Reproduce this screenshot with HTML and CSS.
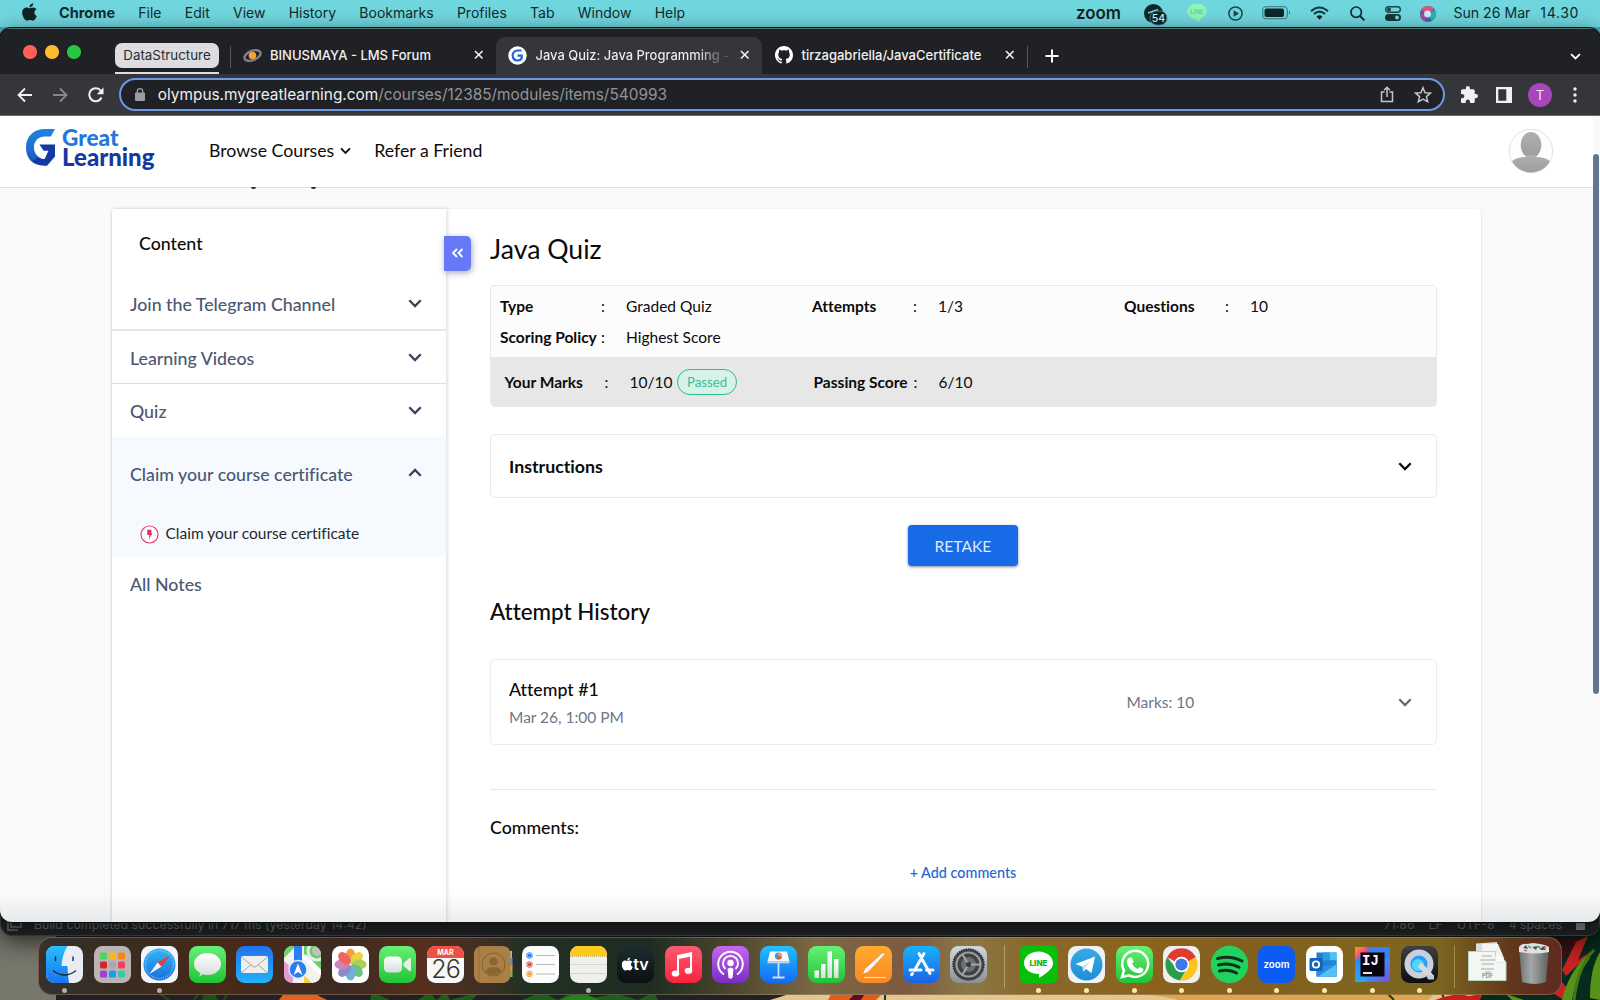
FILE: index.html
```html
<!DOCTYPE html>
<html lang="en">
<head>
<meta charset="utf-8">
<title>Java Quiz: Java Programming</title>
<link rel="stylesheet" href="styles.css">
</head>
<body>
<svg class="defs" width="0" height="0" aria-hidden="true">
  <defs>
    <linearGradient id="gGreen" x2="0" y2="1"><stop stop-color="#67f076"/><stop offset="1" stop-color="#1fc435"/></linearGradient>
    <linearGradient id="gBlue" x2="0" y2="1"><stop stop-color="#2272ee"/><stop offset="1" stop-color="#20b2f8"/></linearGradient>
    <linearGradient id="gFinder" x2="0" y2="1"><stop stop-color="#25c0fa"/><stop offset="1" stop-color="#1c73f4"/></linearGradient>
    <linearGradient id="gRed" x2="0" y2="1"><stop stop-color="#fb5b74"/><stop offset="1" stop-color="#fa233b"/></linearGradient>
    <linearGradient id="gPurple" x2="0" y2="1"><stop stop-color="#c567f0"/><stop offset="1" stop-color="#7a2cc4"/></linearGradient>
    <linearGradient id="gKey" x2="0" y2="1"><stop stop-color="#22c1fd"/><stop offset="1" stop-color="#1469f4"/></linearGradient>
    <linearGradient id="gOrange" x2="0" y2="1"><stop stop-color="#ffab2e"/><stop offset="1" stop-color="#fb8723"/></linearGradient>
    <linearGradient id="gStore" x2="0" y2="1"><stop stop-color="#17b3f8"/><stop offset="1" stop-color="#1d62e6"/></linearGradient>
    <linearGradient id="gGrey" x2="0" y2="1"><stop stop-color="#d2d8de"/><stop offset="1" stop-color="#8d8f92"/></linearGradient>
    <linearGradient id="gWhite" x2="0" y2="1"><stop stop-color="#fff"/><stop offset="1" stop-color="#d8dcdc"/></linearGradient>
    <linearGradient id="gTv" x2="0" y2="1"><stop stop-color="#1d2e30"/><stop offset="1" stop-color="#0a0f12"/></linearGradient>
    <linearGradient id="gTele" x2="0" y2="1"><stop stop-color="#37abe6"/><stop offset="1" stop-color="#1e8fd2"/></linearGradient>
    <linearGradient id="gSafari" x2="0" y2="1"><stop stop-color="#31b6f3"/><stop offset="1" stop-color="#1a6fe0"/></linearGradient>
    <linearGradient id="gIj" x2="1" y2="1"><stop stop-color="#fd9a28"/><stop offset=".25" stop-color="#f0359c"/><stop offset=".6" stop-color="#3f8cf5"/><stop offset="1" stop-color="#7a4df0"/></linearGradient>
    <linearGradient id="gIjBlue" x2="0" y2="1"><stop stop-color="#2f7ff8"/><stop offset="1" stop-color="#28a9ee"/></linearGradient>
    <linearGradient id="gQt" x2="0" y2="1"><stop stop-color="#3e4043"/><stop offset="1" stop-color="#0d0d0f"/></linearGradient>
    <linearGradient id="gTrash" x2="1"><stop stop-color="#6d7273"/><stop offset=".4" stop-color="#a4a8a8"/><stop offset="1" stop-color="#5d6060"/></linearGradient>
    <linearGradient id="gG" x2="0" y2="1"><stop stop-color="#1f83dd"/><stop offset=".6" stop-color="#1f6fd2"/><stop offset="1" stop-color="#1a55bb"/></linearGradient>
    <linearGradient id="gAvatar" x2="0" y2="1"><stop stop-color="#b0b0b0"/><stop offset="1" stop-color="#9c9c9c"/></linearGradient>
    <symbol id="chev" viewBox="0 0 14 9"><path d="M1.3 1.3 7 7l5.700-5.700" fill="none" stroke="currentColor" stroke-width="2.300"/></symbol>
    <symbol id="close" viewBox="0 0 10 10"><path d="M1 1l8 8M9 1 1 9" fill="none" stroke="currentColor" stroke-width="1.700"/></symbol>
    <symbol id="apple" viewBox="0 0 384 512"><path fill="currentColor" d="M318.700 268.700c-.2-36.700 16.400-64.400 50-84.800-18.800-26.900-47.200-41.700-84.700-44.600-35.500-2.800-74.300 20.700-88.500 20.700-15 0-49.400-19.700-76.400-19.700C63.300 141.200 4 184.800 4 273.500q0 39.300 14.400 81.200c12.800 36.700 59 126.700 107.200 125.200 25.200-.6 43-17.900 75.800-17.900 31.800 0 48.300 17.900 76.400 17.900 48.600-.7 90.400-82.500 102.600-119.300-65.200-30.700-61.700-90-61.700-91.900zm-56.600-164.200c27.300-32.400 24.800-61.900 24-72.500-24.100 1.400-52 16.400-67.900 34.900-17.500 19.800-27.800 44.300-25.600 71.900 26.100 2 49.900-11.400 69.500-34.300z"/></symbol>
    <symbol id="gl" viewBox="77 384 84 110" preserveAspectRatio="none"><path fill="url(#gG)" d="M161 384 149 406H132C113 406 100 420 100 438C100 452 106 462 115 468L95 482C83 472 77 456 77 438C77 405 100 384 132 384z"/><path fill="#1539a2" d="M116 430H161V466L138 493C118 493 105 489 94 481L113 467C120 472 126 473 131 473L142 449H128z"/></symbol>
  </defs>
</svg>

<div class="desktop">
  <svg class="wallpaper" viewBox="0 0 1600 100" preserveAspectRatio="none">
    <rect width="1600" height="100" fill="#231f27"/>
    <path d="M0 0H56V100H0z" fill="#77776c"/>
    <path d="M160 94l9 6M200 92l-6 8M205 92h8l4 8h-14zM228 92l-4 8" stroke="#1d4d1a" stroke-width="2" fill="#18521a"/>
    <path d="M285 92h8l10 3 8-3 16 8h-48z" fill="#e65f1f"/>
    <path d="M372 92l18 8h-20zM430 92l6 8 10-8 4 8 30-8-8 8h50l20-8 16 8 14-8 6 8 40-6 20 6 16-8 4 8h-240z" fill="#1c5d17"/>
    <path d="M560 100l20-8 20 8z" fill="#24841c"/>
    <path d="M770 100q20-6 30-10h800v10z" fill="#e4c68c"/>
    <path d="M1118 94q40 0 60 6h250l10-10h-320z" fill="#dfa34e"/>
    <path d="M832 92h52l-8 8h-48z" fill="#e65b1c"/><path d="M856 92h10l-5 8h-12z" fill="#5b0e22"/>
    <path d="M885 92v8M1388 94l6 6M1441 92l4 8" stroke="#1c3d1c" stroke-width="2"/>
    <path d="M1435 100q20-8 34-4 20-4 30 4z" fill="#cb1d1d"/>
    <path d="M1520 0H1600V100H1480z" fill="#062a1c"/>
    <path d="M1535 38h50l-24 24-36 8z" fill="#3a1410"/>
    <path d="M1562 70l14-28 12-6-10 24 18-12-30 28zM1562 82l10 12-8 6-20-12z" fill="#c92222"/>
    <path d="M1562 100q6-26 24-44l4 2q-14 18-18 42zM1590 98q0-30 10-46v48zM1506 94l18 6h-12z" fill="#57921a"/>
    <path d="M1574 100q4-34 20-50" fill="none" stroke="#3c7a17" stroke-width="3"/>
  </svg>

  <div class="ide">
    <div class="ide-status">
      <svg class="ide-box" viewBox="0 0 14 14"><path d="M4 0V10H14V0M1 3V13H11" fill="none" stroke="#626466" stroke-width="1.500"/></svg>
      <span class="ide-msg">Build completed successfully in 717 ms (yesterday 14:42)</span>
      <span class="ide-info"><span>71:86</span><span>LF</span><span>UTF-8</span><span>4 spaces</span><i></i></span>
    </div>
  </div>

  <header class="menubar">
    <svg class="apple"><use href="#apple"/></svg>
    <nav class="menus"><b>Chrome</b><span>File</span><span>Edit</span><span>View</span><span>History</span><span>Bookmarks</span><span>Profiles</span><span>Tab</span><span>Window</span><span>Help</span></nav>
    <div class="status">
      <svg width="46" height="14" viewBox="0 0 46 14"><text x="0" y="12.500" class="zoom-word" textLength="45" lengthAdjust="spacingAndGlyphs">zoom</text></svg>
      <svg width="23" height="21" viewBox="0 0 23 21"><circle cx="9.500" cy="9.500" r="9.500" fill="#0f2628"/><path d="M4 9l10-3.500" stroke="#6fd5dc" stroke-width="1.500"/><rect x="6" y="7" width="17" height="14" rx="7" fill="#0f2628" stroke="#49939a" stroke-width=".8"/><text x="14.500" y="18" class="badge-num">54</text></svg>
      <svg width="20" height="20" viewBox="0 0 20 20"><path d="M10 .5c5.300 0 9.500 3.500 9.500 8 0 4-4 6.500-9.500 11V16.500C4.500 16.500.5 13 .5 8.500s4.200-8 9.500-8z" fill="#8df5b6"/><text x="10" y="11" class="line-mini">LINE</text></svg>
      <svg width="15" height="15" viewBox="0 0 15 15"><circle cx="7.500" cy="7.500" r="6.600" fill="none" stroke="#17474b" stroke-width="1.500"/><path d="M5.600 4.300 11 7.500l-5.400 3.200z" fill="#17474b"/></svg>
      <svg width="29" height="14" viewBox="0 0 29 14"><rect x=".7" y=".7" width="24.600" height="12" rx="3.500" fill="none" stroke="#3d8b91" stroke-width="1.300"/><rect x="2.500" y="2.500" width="19.500" height="8.500" rx="2" fill="#0f2628"/><path d="M27 4.500q2 2 0 4.500z" fill="#2d7177"/></svg>
      <svg width="19" height="14" viewBox="0 0 19 14"><path d="M1 5.200q8.500-7.500 17 0M3.900 8.100q5.600-5 11.200 0" fill="none" stroke="#123c40" stroke-width="2"/><path d="M6.500 10.600q3-2.500 6 0L9.500 13.700z" fill="#0f2628"/></svg>
      <svg width="15" height="15" viewBox="0 0 15 15"><circle cx="6.200" cy="6.200" r="5.200" fill="none" stroke="#0f2f32" stroke-width="1.700"/><path d="M10 10l4.400 4.400" stroke="#0f2f32" stroke-width="2"/></svg>
      <svg width="16" height="15" viewBox="0 0 16 15"><rect x=".7" y=".7" width="14.600" height="5.500" rx="2.700" fill="none" stroke="#14464b" stroke-width="1.400"/><circle cx="4" cy="3.400" r="2" fill="#14464b"/><rect y="8" width="16" height="7" rx="3.500" fill="#14383b"/><circle cx="12" cy="11.500" r="2" fill="#6fd5dc"/></svg>
      <svg width="16" height="16" viewBox="0 0 16 16"><circle cx="8" cy="8" r="8" fill="#4a61a8"/><path d="M8 8 1 4A8 8 0 0 1 14 3z" fill="#e0527c"/><path d="M8 8l7-4a8 8 0 0 1-3 11z" fill="#2bb5ae"/><path d="M8 8 4 15A8 8 0 0 1 0 8z" fill="#a34bb0"/><circle cx="7.500" cy="8" r="3.400" fill="#dff" opacity=".85"/></svg>
      <span class="clock"><span>Sun 26 Mar</span><span class="time">14.30</span></span>
    </div>
  </header>

  <main class="window">
    <div class="tabstrip">
      <div class="lights"><i class="r"></i><i class="y"></i><i class="g"></i></div>
      <div class="group"><span>DataStructure</span></div>
      <div class="tab first">
        <svg width="19" height="15" viewBox="0 0 19 15"><ellipse cx="9.500" cy="7.500" rx="8.500" ry="4.600" fill="none" stroke="#7f8186" stroke-width="2.400" transform="rotate(-22 9.500 7.500)"/><circle cx="9.500" cy="7.500" r="3.800" fill="#f0a03c"/></svg>
        <span class="tab-title">BINUSMAYA - LMS Forum</span><svg class="x"><use href="#close"/></svg>
      </div>
      <div class="tab active">
        <svg width="19" height="19" viewBox="0 0 19 19"><circle cx="9.500" cy="9.500" r="9.200" fill="#fff"/><path d="M13.500 4.500H9.800a5 5 0 1 0 3.900 7.800V9.600H9.500" fill="none" stroke="#1f62c9" stroke-width="2.200"/></svg>
        <span class="tab-title fade">Java Quiz: Java Programming -</span><svg class="x"><use href="#close"/></svg>
      </div>
      <div class="tab third">
        <svg width="18" height="18" viewBox="0 0 16 16"><path fill="#fff" d="M8 0C3.580 0 0 3.580 0 8c0 3.540 2.290 6.530 5.470 7.590.4.070.55-.17.55-.38 0-.19-.01-.82-.01-1.490-2.010.37-2.530-.49-2.690-.94-.09-.23-.48-.94-.82-1.130-.28-.15-.68-.52-.01-.53.63-.01 1.080.58 1.230.82.72 1.210 1.870.87 2.330.66.070-.52.28-.87.51-1.070-1.780-.2-3.640-.89-3.640-3.950 0-.87.31-1.590.82-2.150-.08-.2-.36-1.020.08-2.120 0 0 .67-.21 2.200.82.640-.18 1.320-.27 2-.27s1.360.09 2 .27c1.530-1.040 2.200-.82 2.200-.82.440 1.100.16 1.920.08 2.120.51.560.82 1.270.82 2.150 0 3.070-1.870 3.750-3.650 3.950.29.250.54.730.54 1.480 0 1.070-.01 1.930-.01 2.200 0 .21.15.46.55.38A8 8 0 0 0 16 8c0-4.420-3.580-8-8-8z"/></svg>
        <span class="tab-title">tirzagabriella/JavaCertificate</span><svg class="x"><use href="#close"/></svg>
      </div>
      <svg class="plus" viewBox="0 0 14 14"><path d="M7 .5v13M.5 7h13" stroke="#fff" stroke-width="2"/></svg>
      <svg class="tabs-more"><use href="#chev"/></svg>
    </div>

    <div class="toolbar">
      <svg class="nav-i" viewBox="0 0 16 16"><path d="M15 8H2M8 1.500 1.500 8 8 14.500" fill="none" stroke="#f0f1f3" stroke-width="1.800"/></svg>
      <svg class="nav-i dim" viewBox="0 0 16 16"><path d="M1 8h13M8 1.500 14.500 8 8 14.500" fill="none" stroke="#85878a" stroke-width="1.800"/></svg>
      <svg class="nav-i" viewBox="0 0 16 16"><path d="M13.600 10.500A6.500 6.500 0 1 1 12.800 3.600" fill="none" stroke="#f0f1f3" stroke-width="2"/><path d="M15.500.5v6.700H8.800z" fill="#f0f1f3"/></svg>
      <div class="omnibox">
        <svg width="10" height="13" viewBox="0 0 10 13"><rect y="4.500" width="10" height="8.500" rx="1" fill="#9a9da1"/><path d="M2.300 5V3.300a2.700 2.700 0 0 1 5.400 0V5" fill="none" stroke="#9a9da1" stroke-width="1.400"/></svg>
        <span class="url">olympus.mygreatlearning.com<em>/courses/12385/modules/items/540993</em></span>
        <svg width="14" height="17" viewBox="0 0 14 17"><path d="M4.500 6H1.500v9.500h11V6H9.500M7 11V1.500M4 4.300l3-3 3 3" fill="none" stroke="#c3c5c8" stroke-width="1.500"/></svg>
        <svg width="18" height="17" viewBox="0 0 18 17"><path d="M9 1.700l2.100 5 5.400.4-4.100 3.500 1.300 5.200L9 13l-4.700 2.800 1.300-5.200L1.500 7.100l5.400-.4z" fill="none" stroke="#c3c5c8" stroke-width="1.500"/></svg>
      </div>
      <div class="tools">
        <svg width="17" height="17" viewBox="2 1 21 21"><path fill="#f0f1f3" d="M20.500 11H19V7c0-1.100-.9-2-2-2h-4V3.500a2.500 2.500 0 0 0-5 0V5H4c-1.100 0-1.990.9-1.990 2v3.800H3.500c1.490 0 2.700 1.210 2.700 2.700s-1.210 2.700-2.700 2.700H2V20c0 1.100.9 2 2 2h3.800v-1.500c0-1.490 1.210-2.700 2.700-2.700s2.700 1.210 2.700 2.700V22H17c1.100 0 2-.9 2-2v-4h1.500a2.500 2.500 0 0 0 0-5z"/></svg>
        <svg width="16" height="16" viewBox="0 0 16 16"><path d="M0 0h16v16H0zM2.300 2.300v11.400h8V2.300z" fill="#f0f1f3" fill-rule="evenodd"/></svg>
        <span class="profile">T</span>
        <svg width="4" height="16" viewBox="0 0 4 16"><circle cx="2" cy="2" r="1.700" fill="#f0f1f3"/><circle cx="2" cy="8" r="1.700" fill="#f0f1f3"/><circle cx="2" cy="14" r="1.700" fill="#f0f1f3"/></svg>
      </div>
    </div>

    <div class="page">
      <div class="site-header">
        <div class="logo"><svg width="29" height="37"><use href="#gl"/></svg><div class="logo-words"><span>Great</span><strong>Learning</strong></div></div>
        <a class="browse">Browse Courses <svg><use href="#chev"/></svg></a>
        <a class="refer">Refer a Friend</a>
        <svg class="avatar" viewBox="0 0 46 46"><defs><clipPath id="av"><circle cx="23" cy="23" r="21.500"/></clipPath></defs><circle cx="23" cy="23" r="21.700" fill="#fdfdfd" stroke="#e2e2e2"/><g clip-path="url(#av)" fill="url(#gAvatar)"><ellipse cx="23" cy="17" rx="10.300" ry="13"/><path d="M18 27h10v2q10 0 15 5v12H3V34q5-5 15-5z"/></g></svg>
      </div>
      <div class="crumbs"><i></i><i></i></div>
      <div class="card">
        <aside class="sidebar">
          <h2>Content</h2>
          <div class="row line2">Join the Telegram Channel<svg class="cv"><use href="#chev"/></svg></div>
          <div class="row line1">Learning Videos<svg class="cv"><use href="#chev"/></svg></div>
          <div class="row">Quiz<svg class="cv"><use href="#chev"/></svg></div>
          <section class="open">
            <div class="row">Claim your course certificate<svg class="cv up"><use href="#chev"/></svg></div>
            <div class="sub"><svg width="19" height="19" viewBox="0 0 19 19"><circle cx="9.500" cy="9.500" r="8.500" fill="#fff" stroke="#e2447b" stroke-width="1.200"/><path d="M7.200 4.800h4.300l-.2 3.200h1.200l-3.400 6.500.3-4.400H7.200z" fill="#e0336d"/></svg>Claim your course certificate</div>
          </section>
          <div class="row notes">All Notes</div>
          <button class="collapse"><svg width="13" height="10" viewBox="0 0 13 10"><path d="M6 1 2 5l4 4M11.500 1l-4 4 4 4" fill="none" stroke="#fff" stroke-width="1.900"/></svg></button>
        </aside>
        <section class="content">
          <h1>Java Quiz</h1>
          <div class="info">
            <div class="facts">
              <p><b>Type</b><i>:</i>Graded Quiz</p><p><b>Attempts</b><i>:</i>1/3</p><p><b>Questions</b><i>:</i>10</p>
              <p><b>Scoring Policy</b><i>:</i>Highest Score</p>
            </div>
            <div class="marks">
              <p><b>Your Marks</b><i>:</i>10/10<span class="pill">Passed</span></p><p><b>Passing Score</b><i>:</i>6/10</p>
            </div>
          </div>
          <div class="panel instructions"><b>Instructions</b><svg class="cv"><use href="#chev"/></svg></div>
          <button class="retake">RETAKE</button>
          <h3>Attempt History</h3>
          <div class="panel attempt"><div class="when"><span>Attempt #1</span><small>Mar 26, 1:00 PM</small></div><span class="score">Marks: 10</span><svg class="cv"><use href="#chev"/></svg></div>
          <hr>
          <h4>Comments:</h4>
          <a class="add">+ Add comments</a>
        </section>
      </div>
      <div class="scrollbar"><i></i></div>
      <div class="edge-shade"></div>
    </div>
  </main>

  <footer class="dock">
    <div class="app on"><svg viewBox="0 0 37 37"><rect width="37" height="37" rx="8.500" fill="#e9ecf3"/><path d="M8.500 0H21.500Q16 9 15.500 20H21.500Q21.700 30 23 37H8.500A8.500 8.500 0 0 1 0 28.500v-20A8.500 8.500 0 0 1 8.500 0z" fill="url(#gFinder)"/><path d="M9.500 11v3.500M27 11v3.500M7.500 25q11 8 22 0" fill="none" stroke="#1b2838" stroke-width="1.400" stroke-linecap="round"/></svg></div>
    <div class="app"><svg viewBox="0 0 37 37"><rect width="37" height="37" rx="8.500" fill="#bab5b4"/><g><rect x="6" y="6.500" width="7" height="7" rx="1.600" fill="#4cd655"/><rect x="15" y="6.500" width="7" height="7" rx="1.600" fill="#fcb713"/><rect x="24" y="6.500" width="7" height="7" rx="1.600" fill="#fb8312"/><rect x="6" y="15.500" width="7" height="7" rx="1.600" fill="#d3262c"/><rect x="15" y="15.500" width="7" height="7" rx="1.600" fill="#a9a9ad"/><rect x="24" y="15.500" width="7" height="7" rx="1.600" fill="#f83f63"/><rect x="6" y="24.500" width="7" height="7" rx="1.600" fill="#a03fd0"/><rect x="15" y="24.500" width="7" height="7" rx="1.600" fill="#1a9af4"/><rect x="24" y="24.500" width="7" height="7" rx="1.600" fill="#38cba3"/></g></svg></div>
    <div class="app on"><svg viewBox="0 0 37 37"><rect width="37" height="37" rx="8.500" fill="#f4f5f7"/><circle cx="18.500" cy="18.500" r="16" fill="url(#gSafari)"/><circle cx="18.500" cy="18.500" r="14" fill="none" stroke="#9fd6fa" stroke-width="1.600" stroke-dasharray=".7 1.500"/><path d="M29 9.500 20.500 20.500 16.500 16.500z" fill="#ec3b35"/><path d="M8.500 28 16.500 16.500l4 4z" fill="#f4f6f8"/></svg></div>
    <div class="app"><svg viewBox="0 0 37 37"><rect width="37" height="37" rx="8.500" fill="url(#gGreen)"/><path d="M18.500 7C26 7 32 11.700 32 18s-6 11-13.500 11q-2.500 0-4.800-.7Q12 30.300 9.500 30.500q1.800-1.500 1.800-3.500C7.500 25 5 21.700 5 18 5 11.700 11 7 18.500 7z" fill="url(#gWhite)"/></svg></div>
    <div class="app"><svg viewBox="0 0 37 37"><rect width="37" height="37" rx="8.500" fill="url(#gBlue)"/><rect x="5" y="10" width="27" height="17" rx="2" fill="#f0efee"/><path d="M5.500 11 17 20.500q1.500 1.200 3 0L31.500 11M6 26.500l9-8M31 26.500l-9-8" fill="none" stroke="#a5a5a8" stroke-width="1"/></svg></div>
    <div class="app"><svg viewBox="0 0 37 37"><defs><clipPath id="rr"><rect width="37" height="37" rx="8.500"/></clipPath></defs><g clip-path="url(#rr)"><rect width="37" height="37" fill="#f3f3ee"/><path d="M0 0h12L0 12z" fill="#6fd36c"/><path d="M20 0h17v26L20 8z" fill="#68cf62"/><circle cx="33" cy="5" r="9" fill="none" stroke="#e9ecec" stroke-width="3"/><circle cx="33" cy="5" r="5" fill="#b9c4c0"/><path d="M0 15l9 8v14H0z" fill="#e39ad3"/><path d="M20 37V29l8 8z" fill="#fbd03c"/><path d="M10 0h8v20h-8z" fill="#2a7df5"/><path d="M20 10l17 17" stroke="#fff" stroke-width="5"/></g><circle cx="14" cy="23.500" r="9" fill="#2b7cf0" stroke="#e4effc" stroke-width="1.400"/><path d="M14 17.500l4.500 11.500-4.500-3-4.500 3z" fill="#fff"/></svg></div>
    <div class="app"><svg viewBox="0 0 37 37"><rect width="37" height="37" rx="8.500" fill="#fff"/><g opacity=".88"><ellipse cx="18.500" cy="10" rx="5" ry="7.500" fill="#f79425"/><ellipse cx="18.500" cy="10" rx="5" ry="7.500" fill="#e6cd25" transform="rotate(45 18.500 18.500)"/><ellipse cx="18.500" cy="10" rx="5" ry="7.500" fill="#a3c93a" transform="rotate(90 18.500 18.500)"/><ellipse cx="18.500" cy="10" rx="5" ry="7.500" fill="#5bb974" transform="rotate(135 18.500 18.500)"/><ellipse cx="18.500" cy="10" rx="5" ry="7.500" fill="#62a4cf" transform="rotate(180 18.500 18.500)"/><ellipse cx="18.500" cy="10" rx="5" ry="7.500" fill="#7b79c2" transform="rotate(225 18.500 18.500)"/><ellipse cx="18.500" cy="10" rx="5" ry="7.500" fill="#c274b0" transform="rotate(270 18.500 18.500)"/><ellipse cx="18.500" cy="10" rx="5" ry="7.500" fill="#ea5449" transform="rotate(315 18.500 18.500)"/></g></svg></div>
    <div class="app"><svg viewBox="0 0 37 37"><rect width="37" height="37" rx="8.500" fill="url(#gGreen)"/><rect x="5" y="10.500" width="18" height="16" rx="4.500" fill="url(#gWhite)"/><path d="M24.500 17l6-5q1.500-.7 1.500 1v11q0 1.700-1.500 1l-6-5z" fill="#e6efe6"/></svg></div>
    <div class="app"><svg viewBox="0 0 37 37"><rect width="37" height="37" rx="8.500" fill="#f8f8f8"/><path d="M0 12V8.500A8.500 8.500 0 0 1 8.500 0h20A8.500 8.500 0 0 1 37 8.500V12z" fill="#ee5048"/><text x="18.500" y="9.200" class="cal-m">MAR</text><text x="18.500" y="31.500" class="cal-d">26</text></svg></div>
    <div class="app"><svg viewBox="0 0 37 37"><path d="M30 5h8v7h-8z" fill="#b4b4b4"/><path d="M30 12h8.500v7H30z" fill="#3f9ae0"/><path d="M30 19h8.500v6H30z" fill="#f29432"/><path d="M30 25h8.500v6H30z" fill="#58c04c"/><rect width="36.500" height="37" rx="8" fill="#ab8046"/><path d="M5 0v37" stroke="#946d39" stroke-width=".8"/><circle cx="19.500" cy="18.500" r="11.500" fill="none" stroke="#82602f" stroke-width="1"/><circle cx="19.500" cy="15.500" r="4.200" fill="#8a6633"/><path d="M11.500 26q1-5 8-5t8 5q-8 6-16 0z" fill="#8a6633"/></svg></div>
    <div class="app"><svg viewBox="0 0 37 37"><rect width="37" height="37" rx="8.500" fill="#fcfcfc"/><g fill="none"><g stroke="#b9b9bb"><path d="M14 9.500h19M14 18.500h19M14 28h19"/></g><circle cx="7.500" cy="9.500" r="2.800" stroke="#1f7ceb"/><circle cx="7.500" cy="18.500" r="2.800" stroke="#e8443b"/><circle cx="7.500" cy="28" r="2.800" stroke="#f29a2f"/></g><circle cx="7.500" cy="9.500" r="1.800" fill="#1f7ceb"/><circle cx="7.500" cy="18.500" r="1.800" fill="#e8443b"/><circle cx="7.500" cy="28" r="1.800" fill="#f29a2f"/></svg></div>
    <div class="app on"><svg viewBox="0 0 37 37"><rect width="37" height="37" rx="8.500" fill="#f0efeb"/><path d="M0 10V8.500A8.500 8.500 0 0 1 8.500 0h20A8.500 8.500 0 0 1 37 8.500V10z" fill="#fcca1d"/><path d="M0 10.500h37" stroke="#b9a978" stroke-dasharray="1 1"/><path d="M0 18.500h37M0 27.500h37" stroke="#d6d5d1"/></svg></div>
    <div class="app"><svg viewBox="0 0 37 37"><rect width="37" height="37" rx="8.500" fill="url(#gTv)"/><svg x="4.500" y="10.500" width="11.500" height="15" color="#fff"><use href="#apple"/></svg><text x="24" y="24" class="tv">tv</text></svg></div>
    <div class="app"><svg viewBox="0 0 37 37"><rect width="37" height="37" rx="8.500" fill="url(#gRed)"/><path d="M13 27V10.500L26 7.700V24.500" fill="none" stroke="#fff" stroke-width="2"/><path d="M12.500 9 27 6v4.200l-14.500 3z" fill="#fff"/><ellipse cx="10.500" cy="27.500" rx="3.800" ry="3.100" fill="#fff"/><ellipse cx="23.500" cy="24.800" rx="3.800" ry="3.100" fill="#fff"/></svg></div>
    <div class="app"><svg viewBox="0 0 37 37"><rect width="37" height="37" rx="8.500" fill="url(#gPurple)"/><g fill="none" stroke="#fff" stroke-width="1.900"><path d="M12 28.500a12.300 12.300 0 1 1 13 0"/><path d="M13.500 23a7.500 7.500 0 1 1 10 0"/></g><circle cx="18.500" cy="17" r="3.200" fill="#fff"/><path d="M15.500 23q3-3 6 0l-1 8.500q-2 2.500-4 0z" fill="#fff"/></svg></div>
    <div class="app"><svg viewBox="0 0 37 37"><rect width="37" height="37" rx="8.500" fill="url(#gKey)"/><path d="M10 5.500h17l2.500 10h-22z" fill="#f6f8fa"/><path d="M7.500 15.500h22v1.800h-22z" fill="#c3d8e9"/><path d="M18.500 17v14M12.500 31.500h12" stroke="#c7e1f6" stroke-width="1.800"/><circle cx="18.500" cy="10" r="3.600" fill="#3b9be8"/><path d="M18.500 10V6.400a3.600 3.600 0 0 1 3.400 4.800z" fill="#f4a13a"/><path d="M18.500 10l3.400 1.200a3.600 3.600 0 0 1-5.200 1.900z" fill="#e4574f"/></svg></div>
    <div class="app"><svg viewBox="0 0 37 37"><rect width="37" height="37" rx="8.500" fill="url(#gGreen)"/><g fill="url(#gWhite)"><rect x="6.500" y="24.500" width="4.500" height="7.500"/><rect x="13" y="18" width="4.500" height="14"/><rect x="19.500" y="5.500" width="4.500" height="26.500"/><rect x="26" y="13" width="4.500" height="19"/></g></svg></div>
    <div class="app"><svg viewBox="0 0 37 37"><rect width="37" height="37" rx="8.500" fill="url(#gOrange)"/><path d="M7.500 28.500 9.500 23 26.500 7.500q3-2 3.500.8L13.500 26z" fill="#fdf3e6" stroke="#c07324" stroke-width=".5"/><path d="M9 31.500h22" stroke="#ffe2b8" stroke-width="1.200"/></svg></div>
    <div class="app"><svg viewBox="0 0 37 37"><rect width="37" height="37" rx="8.500" fill="url(#gStore)"/><g stroke="#f2f8fe" stroke-width="3" stroke-linecap="round" fill="none"><path d="M16 7.500l11 20M21 7.500l-9.500 17M9.500 27.500l-1 1.200M7 24h11M23.500 24H30"/></g></svg></div>
    <div class="app"><svg viewBox="0 0 37 37"><rect width="37" height="37" rx="8.500" fill="url(#gGrey)"/><circle cx="18.500" cy="18.500" r="15.500" fill="#3f4245" stroke="#303234" stroke-width="1.500" stroke-dasharray="1.400 1"/><circle cx="18.500" cy="18.500" r="12" fill="none" stroke="#9b9da0" stroke-width="2.200"/><circle cx="18.500" cy="18.500" r="7.500" fill="#6d6f72"/><path d="M18.500 18.500 30 18.500M18.500 18.500l-6-10M18.500 18.500l-6 10" stroke="#a4a6a9" stroke-width="2"/><circle cx="18.500" cy="18.500" r="2.500" fill="#37393b"/></svg></div>
    <i class="sep"></i>
    <div class="app on"><svg viewBox="0 0 37 37"><rect x="-.5" y="-.5" width="38" height="38" rx="6" fill="#08bf0b"/><path d="M18.500 5.500C26.500 5.500 33 10.500 33 17c0 4-2.500 6.500-5.500 9-3 2.600-6 4.500-8.500 5.800V28C10.500 28 4 23.500 4 17S10.500 5.500 18.500 5.500z" fill="#fff"/><text x="18.500" y="20" class="line-app">LINE</text></svg></div>
    <div class="app on"><svg viewBox="0 0 37 37"><rect width="37" height="37" rx="8.500" fill="#eef1f5"/><circle cx="18.500" cy="18.500" r="16" fill="url(#gTele)"/><path d="M7.500 18 27 10.500 23.500 27l-5.500-4-2.800 2.800-.6-5z" fill="#fff"/><path d="M14.600 20.800l8.500-6.500-6 7.500-1.900 4z" fill="#c4dcec"/></svg></div>
    <div class="app on"><svg viewBox="0 0 37 37"><rect width="37" height="37" rx="8.500" fill="url(#gGreen)"/><path d="M6 31l2-6.500A13 13 0 1 1 13 29.300z" fill="none" stroke="#fff" stroke-width="2.500"/><path d="M14 11.500l2 .3 1.600 4-1.500 2q2 4 5.500 5.300l2-2 3.800 1.900q0 4-4 4.200c-7 0-12.500-6.500-12.500-11.500q.3-3.500 3.100-4.200z" fill="#fff"/></svg></div>
    <div class="app on"><svg viewBox="0 0 37 37"><rect width="37" height="37" rx="8.500" fill="#f0efee"/><path d="M18.500 18.500 4.200 11A16 16 0 0 1 32.700 11z" fill="#e03b30"/><path d="M4.200 11A16 16 0 0 0 17 34.400l7-12L12 21z" fill="#2a9e4b"/><path d="M32.700 11A16 16 0 0 1 17 34.400l8.500-13L21 11z" fill="#fbc520"/><path d="M4.200 11h28.500L18.500 19z" fill="#e03b30"/><circle cx="18.500" cy="18.500" r="7.700" fill="#fff"/><circle cx="18.500" cy="18.500" r="6.100" fill="#3a78ea"/></svg></div>
    <div class="app on"><svg viewBox="0 0 37 37"><circle cx="18.500" cy="18.500" r="18.700" fill="#21d25f"/><path d="M6.500 12.500q13-3.500 24.500 2.500M7.500 19q11-3 20.500 2.300M8.500 25q9.500-2.200 17 2" fill="none" stroke="#10301c" stroke-width="3" stroke-linecap="round"/></svg></div>
    <div class="app on"><svg viewBox="0 0 37 37"><rect width="37" height="37" rx="8.500" fill="#0b5cf2"/><text x="18.500" y="22" class="zoom-app" textLength="26" lengthAdjust="spacingAndGlyphs">zoom</text></svg></div>
    <div class="app on"><svg viewBox="0 0 37 37"><rect width="37" height="37" rx="8.500" fill="#fff"/><path d="M10.500 6.500h20v24h-20z" fill="#1f7fd2"/><path d="M17 6.500h7v8h-7z" fill="#2a9ce6"/><path d="M24 6.500h6.500v8H24z" fill="#46c4f6"/><path d="M24 14.500h6.500v8H24z" fill="#2386d8"/><path d="M10.500 20l20-1v11.500h-20z" fill="#2a8ee0"/><path d="M12 30.500 30.500 18.500v12z" fill="#56c2f4"/><rect x="3.500" y="12" width="13" height="13" rx="1.500" fill="#1264b8"/><circle cx="10" cy="18.500" r="3.200" fill="none" stroke="#fff" stroke-width="1.800"/></svg></div>
    <div class="app on"><svg viewBox="0 0 37 37"><path d="M1 1h35v35H1z" fill="url(#gIj)"/><path d="M1 14l10-6v28H1z" fill="url(#gIjBlue)"/><path d="M12 1l24 0v12H20z" fill="#3c7ff2"/><path d="M6.500 6.500h24v24h-24z" fill="#0a0309"/><text x="8" y="18.500" class="ij">IJ</text><path d="M9 27h9" stroke="#fff" stroke-width="1.800"/></svg></div>
    <div class="app on"><svg viewBox="0 0 37 37"><rect width="37" height="37" rx="8.500" fill="url(#gQt)"/><circle cx="18" cy="18" r="11.500" fill="#2b9df2" stroke="#c9d0dc" stroke-width="6"/><circle cx="17" cy="19" r="6" fill="#4ed7fb"/><path d="M18.500 18.500 30 30.500" stroke="#d4d9e2" stroke-width="5.500"/><path d="M25 29h8v4.500h-6z" fill="#c2c9d4"/></svg></div>
    <i class="sep two"></i>
    <div class="docs"><svg viewBox="0 0 39 39"><path d="M8 1.500 29 0l3 22H8z" fill="#dcdedd"/><path d="M14 2h16l6 14v6H14z" fill="#f3f4f3"/><path d="M.5 9.500H27l1 5 10 5.500v18.500H.5z" fill="#f3f7f4" stroke="#b7d6c4" stroke-width="1"/><path d="M28 8l10 12H28z" fill="#fff" stroke="#c5c8c6" stroke-width=".5"/><path d="M14 14h10M12 18h15M14 22h12M13 27h13M17 30h6" stroke="#8e9794" stroke-width=".8"/><text x="19.500" y="36" class="pdf">PDF</text></svg></div>
    <div class="trash"><svg viewBox="0 0 33 42"><path d="M1 4 31 4 28 39q-11 4-24 0z" fill="url(#gTrash)"/><path d="M1 4q3-4 8-3l6-1 7 1 5 1 4 2v5q-15 3-30 0z" fill="#dfe1e0"/><path d="M5 5l3-3 2 4zM14 4l4 3 2-4zM22 7l3-4 3 4zM9 7l3 1" fill="#5b4c4c"/><path d="M10 3l3 2M20 3l3 3" stroke="#2a9d86" stroke-width="1.500"/><path d="M26 3l2 2M6 7l3 1" stroke="#c34a4a" stroke-width="1.200"/></svg></div>
  </footer>
</div>
</body>
</html>
```
FILE: styles.css
```css
* { box-sizing: border-box; }
body { margin: 0; overflow: hidden; font-family: Lato, sans-serif; color: #0b0b0c; font-variant-ligatures: none; }
h1, h2, h3, h4, p { margin: 0; font-weight: 400; }
button { border: 0; padding: 0; font: inherit; font-variant-ligatures: none; }
i { font-style: normal; }
svg { flex: none; display: block; overflow: visible; }
.defs { position: absolute; }

.desktop { position: relative; width: 1600px; height: 1000px; overflow: hidden; background: #4aa9b0; }
.wallpaper { position: absolute; left: 0; top: 900px; width: 1600px; height: 100px; }

/* menu bar */
.menubar { display: flex; align-items: center; height: 27px; padding: 0 21px 1px 22px; background: #70d6de; font: 14px/26px Inter, sans-serif; color: #102c2e; }
.apple { width: 15px; height: 20px; color: #102426; margin-bottom: 2px; }
.menus { display: flex; gap: 23.250px; margin-left: 22px; }
.menus b { font-weight: 700; font-size: 14.500px; }
.status { display: flex; align-items: center; margin-left: auto; }
.status svg:nth-of-type(2) { margin-left: 21.500px; margin-top: 2px; }
.status svg:nth-of-type(3) { margin-left: 20px; }
.status svg:nth-of-type(4) { margin-left: 21.500px; margin-top: 1px; }
.status svg:nth-of-type(5) { margin-left: 19px; }
.status svg:nth-of-type(6) { margin-left: 19px; }
.status svg:nth-of-type(7) { margin-left: 20.500px; margin-top: 1px; }
.status svg:nth-of-type(8) { margin-left: 20.500px; margin-top: 1px; }
.status svg:nth-of-type(9) { margin-left: 18.500px; margin-top: 1px; }
.clock { display: flex; gap: 10px; margin-left: 17.500px; font-size: 14.100px; white-space: nowrap; }
.time { letter-spacing: .6px; }
.zoom-word { font: 600 18px Inter, sans-serif; fill: #102426; }
.badge-num { font: 500 10.500px Inter, sans-serif; fill: #c9f1f3; text-anchor: middle; }
.line-mini { font: 700 6px Inter, sans-serif; fill: #5fd2a6; text-anchor: middle; }

/* window behind the browser */
.ide { position: absolute; left: 0; top: 860px; width: 1600px; height: 76px; background: #1e2022; border: 1px solid #3a3b3d; border-radius: 0 0 12px 12px; box-shadow: 0 6px 24px rgba(0,0,0,.6); display: flex; align-items: flex-end; }
.ide-status { display: flex; align-items: center; width: 100%; height: 20px; padding: 0 14px 0 6px; margin-bottom: 0; font: 12.350px/20px Inter, sans-serif; color: #606365; }
.ide-box { width: 14px; height: 14px; margin-top: -2px; }
.ide-msg { margin: 0 0 0 13px; }
.ide-info { display: flex; align-items: center; gap: 14px; margin-left: auto; }
.ide-info i { width: 9px; height: 9px; background: #77797b; }

/* browser window */
.window { position: absolute; left: 0; top: 28px; width: 1600px; height: 894px; overflow: hidden; border-radius: 11px 11px 12px 12px; background: #202124; box-shadow: 0 0 0 1px #0b1414, 0 4px 20px rgba(0,0,0,.55); }
.tabstrip { display: flex; align-items: stretch; height: 46px; border-top: 1px solid #55716c; padding-left: 23px; font: 500 13px/18px Inter, sans-serif; color: #eef0f2; white-space: nowrap; }
.lights { display: flex; align-items: center; gap: 8.700px; width: 92px; height: 46px; }
.lights i { width: 13.500px; height: 13.500px; border-radius: 50%; }
.lights .r { background: #ff5f57; } .lights .y { background: #febc2e; } .lights .g { background: #28c840; }
.group { display: flex; flex-direction: column; justify-content: space-between; width: 104px; padding-top: 14px; border-bottom: 2.500px solid #dcdce1; border-radius: 0; }
.group span { height: 25px; border-radius: 7px; background: #dcdce1; color: #2a2b2e; font: 13.350px/25px Inter, sans-serif; text-align: center; }
.tab { display: flex; align-items: center; padding-top: 7px; }
.tab .x { width: 9.500px; height: 9.500px; margin-left: auto; }
.tab.first { width: 266px; margin-left: 11px; padding-left: 13px; padding-right: 12.500px; gap: 8px; background: linear-gradient(#55575a,#55575a) 0 17px / 1px 22px no-repeat; }
.tab.active { width: 266px; margin: 8px 0 0; padding: 0 13px 1px 12px; gap: 8.500px; background: #35363a; border-radius: 9px 9px 0 0; }
.tab.third { width: 266px; padding-left: 12.500px; padding-right: 13.500px; gap: 9px; background: linear-gradient(#55575a,#55575a) 100% 17px / 1px 22px no-repeat; }
.tab-title { font-size: 13.020px; }
.fade { background: linear-gradient(90deg,#eef0f2 84%,#77797c 93%,#505256 100%); -webkit-background-clip: text; background-clip: text; color: transparent; font-size: 12.950px; }
.plus { width: 14px; height: 14px; margin: 20px 0 0 17px; }
.tabs-more { width: 11px; height: 7px; margin: 24px 19px 0 auto; color: #fff; }
.toolbar { display: flex; align-items: center; height: 42px; padding: 0 23px 0 16.500px; background: #35363a; border-bottom: 1px solid #6a6b6e; }
.nav-i { width: 16px; height: 16px; margin-right: 19.500px; }
.omnibox { display: flex; align-items: center; width: 1326px; height: 33px; margin-left: -4.200px; padding: 0 11px 0 14px; border: 2px solid #6c98e6; border-radius: 17px; background: #202124; font: 15.400px/28px Inter, sans-serif; color: #eceef0; }
.url { margin: 0 auto 0 13px; }
.url em { font-style: normal; color: #929498; }
.omnibox svg + svg { margin-left: 19.500px; }
.tools { display: flex; align-items: center; margin-left: auto; gap: 18px; }
.profile { width: 24px; height: 24px; border-radius: 50%; background: #a846bb; color: #f4e6f6; font: 13px/24px Inter, sans-serif; text-align: center; margin: 0 3px 0 -2px; }

/* web page */
.page { position: relative; height: 806px; background: #f9fafc; }
.site-header { display: flex; align-items: center; height: 72px; padding: 0 46px 2px 26px; background: #fff; border-bottom: 1px solid #dfe1e4; font-size: 17.720px; line-height: 24px; }
.logo { display: flex; gap: 7px; width: 183px; height: 44px; margin-top: -1px; }
.logo svg { margin-top: 1px; }
.logo-words { display: flex; flex-direction: column; font: 900 22.600px/19px Lato, sans-serif; color: #1f78da; }
.logo-words strong { font-weight: 900; color: #15389f; font-size: 24px; line-height: 20px; }
.browse { display: flex; align-items: center; gap: 6px; margin-right: 23px; }
.browse svg { width: 11px; height: 8px; margin-top: 0; }
.avatar { width: 46px; height: 46px; margin-left: auto; }
.crumbs { display: flex; gap: 55px; height: 21px; padding-left: 251px; }
.crumbs i { position: relative; top: -1px; width: 5px; height: 1.500px; background: #333; border-radius: 0 0 2px 2px; }
.card { display: flex; width: 1369px; height: 713px; margin-left: 112px; background: #fff; border-radius: 5px 5px 0 0; box-shadow: 0 1px 3px rgba(40,50,70,.2); }
.sidebar { position: relative; width: 334px; box-shadow: 1px 0 4px rgba(40,50,70,.2); color: #4b5872; font-size: 17.770px; font-weight: 500; line-height: 24px; }
.sidebar h2 { height: 68px; padding: 21.500px 0 0 27px; font-size: 17.750px; font-weight: 500; color: #0b0b0c; }
.row { display: flex; align-items: center; justify-content: space-between; height: 53px; padding: 1px 24.500px 0 18px; }
.row.line2 { height: 54px; padding-top: 2px; border-bottom: 2px solid #e6e6e8; }
.row.line1 { border-bottom: 1px solid #dcdde0; }
.cv { width: 14px; height: 9px; margin-bottom: 1px; }
.row .cv { color: #34425f; }
.up { transform: rotate(180deg); }
.open { height: 120px; background: #f6faff; }
.open .row { height: 73px; padding-top: 0; }
.open .cv { margin-bottom: 2px; }
.sub { display: flex; align-items: center; gap: 6.500px; padding: 11px 0 0 28px; font-size: 15.500px; font-weight: 400; color: #26282d; }
.sub svg { margin-top: 2px; }
.row.notes { height: 54px; padding-top: 0; }
.collapse { position: absolute; left: 332px; top: 26.500px; width: 27px; height: 35.500px; display: flex; align-items: center; justify-content: center; background: #6879f7; border-radius: 0 5px 5px 0; box-shadow: 1px 2px 6px rgba(40,50,90,.4); }
.content { width: 947px; margin-left: 44px; }
.content h1 { padding-top: 24px; height: 76px; font-size: 26.650px; line-height: 32px; }
.info { border: 1px solid #e8e8e8; border-bottom: 0; border-radius: 5px; overflow: hidden; background: #fcfcfc; font-size: 15.520px; line-height: 24px; }
.facts { display: grid; grid-template-columns: 312px 312px auto; grid-auto-rows: 31px; height: 71px; padding: 5px 0 0 9px; }
.info p { display: flex; align-items: center; }
.facts p { padding-bottom: 1px; }
.info b { width: 101px; font-weight: 700; white-space: nowrap; }
.info i { width: 25px; }
.marks { display: grid; grid-template-columns: 309px auto; height: 50px; margin: 0 -1px; padding: 0 0 1px 14.500px; background: #e7e7e7; }
.marks b { width: 100px; }
.pill { margin-left: 4.500px; padding: 0 9px; height: 26px; line-height: 25px; border: 1.200px solid #2cbd8d; border-radius: 13px; background: #d9f2e9; color: #35bf94; font-size: 13.200px; }
.panel { display: flex; align-items: center; border: 1px solid #e9e9ea; border-radius: 5px; }
.instructions { height: 64px; margin-top: 27px; padding: 0 24.500px 0 18px; font-size: 17.750px; }
.instructions .cv { margin-left: auto; margin-bottom: -1px; }
.retake { display: block; width: 110px; height: 41px; margin: 27px 0 0 418px; background: #186be6; color: #dfeafc; border-radius: 4px; font-size: 15.600px; line-height: 42px; box-shadow: 0 1px 3px rgba(0,20,60,.5); }
.content h3 { margin-top: 29.500px; height: 63.500px; line-height: 32px; font-size: 22.400px; font-weight: 500; }
.attempt { height: 86px; padding: 0 24.500px 0 18px; border-color: #ededee; }
.when { display: flex; flex-direction: column; width: 617.500px; font-size: 17.750px; font-weight: 500; line-height: 30px; }
.when small { font-size: 15.480px; font-weight: 400; line-height: 26px; color: #6d7787; }
.score { font-size: 15.450px; color: #6d7787; margin-top: -1px; }
.attempt .cv { margin-left: auto; margin-bottom: 0; color: #6a6a6c; }
hr { margin: 44px 0 0; border: 0; border-top: 1px solid #e6e7e8; }
.content h4 { margin-top: 25px; height: 44.500px; font-size: 17.750px; font-weight: 500; line-height: 24px; }
.add { display: block; text-align: center; font-size: 14.400px; font-weight: 500; line-height: 26px; color: #2367d0; margin-left: -1px; }
.scrollbar { position: absolute; right: 0; top: 0; width: 7px; height: 806px; background: #fafafa; }
.scrollbar i { display: block; width: 6px; height: 540px; margin-top: 38px; border-radius: 3px; background: #66758f; }
.edge-shade { position: absolute; left: 0; right: 0; bottom: 0; height: 30px; background: linear-gradient(rgba(0,0,0,0), rgba(0,0,0,.07)); }

/* dock */
.dock { position: absolute; left: 38px; top: 937px; width: 1524px; height: 58px; display: flex; gap: 10.600px; padding: 7.500px 0 0 7px; border: 1px solid rgba(190,170,140,.35); border-radius: 14px; background: linear-gradient(90deg,#34322e 0,#382c22 5%,#482a18 12%,#3c2b22 20%,#552f1c 25%,#413024 29%,#223024 32%,#1e2c21 40%,#47442c 45%,#7b6844 51%,#7d5a40 57%,#8a7848 61%,#89682b 65%,#8c631f 72%,#825f1f 80%,#80641f 86%,#7b651f 92%,#61351b 97%,#5f2a20 100%); }
.app { width: 37px; height: 46px; flex: none; }
.app svg, .docs svg, .trash svg { width: 100%; }
.app > svg { height: 37px; }
.app svg svg { width: 11.500px; }
.on::after { content: ""; display: block; width: 5px; height: 5px; margin: 5.500px auto 0; border-radius: 50%; background: #b3afa9; }
.sep ~ .on::after { background: #ffe9a6; }
.sep { width: 1px; height: 43px; flex: none; margin: -1px 5px 0 6px; background: #b99a63; }
.sep.two { margin-left: 5px; margin-right: 2.500px; background: #a48a47; }
.docs { width: 39px; height: 39px; flex: none; margin-top: -4px; }
.trash { width: 33px; height: 42px; flex: none; margin: -3px 0 0 0; }
.cal-m { font: 700 7px Inter, sans-serif; fill: #fff; text-anchor: middle; }
.cal-d { font: 300 25px Inter, sans-serif; fill: #333; text-anchor: middle; letter-spacing: -1px; }
.tv { font: 600 16px Inter, sans-serif; fill: #fff; text-anchor: middle; }
.line-app { font: 800 8px Inter, sans-serif; fill: #08b30b; text-anchor: middle; }
.zoom-app { font: 600 10px Inter, sans-serif; fill: #fff; text-anchor: middle; }
.ij { font: 700 14px "Liberation Mono", monospace; fill: #fff; }
.pdf { font: 600 5.500px Inter, sans-serif; fill: #7a8580; text-anchor: middle; }
```
